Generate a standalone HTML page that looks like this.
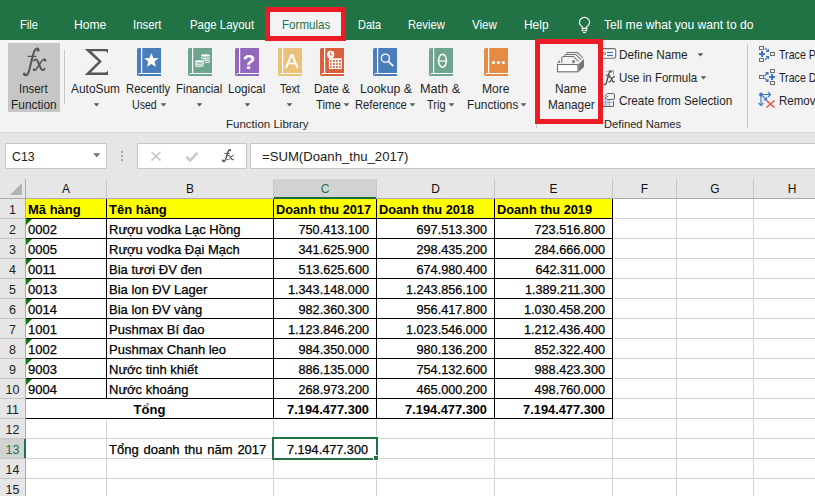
<!DOCTYPE html>
<html><head><meta charset="utf-8"><style>
*{margin:0;padding:0;box-sizing:border-box}
html,body{width:815px;height:496px;overflow:hidden;background:#fff;font-family:"Liberation Sans",sans-serif}
.a{position:absolute}
.tab{position:absolute;top:18px;font-size:12.2px;color:#fff;line-height:14px;white-space:nowrap}
.rb{position:absolute;font-size:12px;color:#262626;line-height:16px;white-space:nowrap;text-align:center}
.hl{position:absolute;background:#d4d4d4}
.vl{position:absolute;background:#d4d4d4}
.ch{position:absolute;top:180px;height:19px;font-size:12px;color:#111;text-align:center;line-height:19px}
.rh{position:absolute;left:0;width:25px;height:19px;font-size:12.5px;color:#222;text-align:center;line-height:22px}
.c{position:absolute;height:19px;font-size:13px;line-height:21px;color:#000;white-space:nowrap;overflow:visible;-webkit-text-stroke:0.25px #000}
.b{font-weight:bold;-webkit-text-stroke:0}
.r{text-align:right}
.n{transform:scaleX(0.975);transform-origin:100% 0}
.nb{transform:scaleX(0.985);transform-origin:100% 0}
</style></head><body>

<div class="a" style="left:0;top:0;width:815px;height:40px;background:#217346"></div>
<svg class="a" style="left:578px;top:16px" width="13" height="18" viewBox="0 0 13 18"><path d="M4.3 12.4V10.9Q1.4 8.6 1.4 6.4A5.1 5.1 0 0 1 11.6 6.4Q11.6 8.6 8.7 10.9V12.4Z" fill="none" stroke="#fff" stroke-width="1.15"/><rect x="4.3" y="12.4" width="4.4" height="2.3" fill="none" stroke="#fff" stroke-width="1.05"/><path d="M5 16.6H8" stroke="#fff" stroke-width="1.1"/></svg>
<div class="a" style="left:0;top:40px;width:815px;height:92px;background:#f3f3f3"></div>
<div class="a" style="left:0;top:132px;width:815px;height:1px;background:#d6d6d6"></div>
<div class="a" style="left:265px;top:7px;width:81px;height:34px;background:#f3f3f3;border:5px solid #ec1c24"></div>
<div class="a" style="left:20.10px;top:18.50px;font-size:12.4px;line-height:12.4px;color:#fff;white-space:nowrap;transform:scaleX(0.8966);transform-origin:0 0;">File</div>
<div class="a" style="left:73.60px;top:18.50px;font-size:12.4px;line-height:12.4px;color:#fff;white-space:nowrap;transform:scaleX(0.9786);transform-origin:0 0;">Home</div>
<div class="a" style="left:133.40px;top:18.50px;font-size:12.4px;line-height:12.4px;color:#fff;white-space:nowrap;transform:scaleX(0.9161);transform-origin:0 0;">Insert</div>
<div class="a" style="left:189.60px;top:18.50px;font-size:12.4px;line-height:12.4px;color:#fff;white-space:nowrap;transform:scaleX(0.9206);transform-origin:0 0;">Page Layout</div>
<div class="a" style="left:357.70px;top:18.50px;font-size:12.4px;line-height:12.4px;color:#fff;white-space:nowrap;transform:scaleX(0.8846);transform-origin:0 0;">Data</div>
<div class="a" style="left:408.00px;top:18.50px;font-size:12.4px;line-height:12.4px;color:#fff;white-space:nowrap;transform:scaleX(0.9048);transform-origin:0 0;">Review</div>
<div class="a" style="left:471.90px;top:18.50px;font-size:12.4px;line-height:12.4px;color:#fff;white-space:nowrap;transform:scaleX(0.9377);transform-origin:0 0;">View</div>
<div class="a" style="left:524.40px;top:18.50px;font-size:12.4px;line-height:12.4px;color:#fff;white-space:nowrap;transform:scaleX(0.9615);transform-origin:0 0;">Help</div>
<div class="a" style="left:604.40px;top:18.50px;font-size:12.4px;line-height:12.4px;color:#fff;white-space:nowrap;transform:scaleX(0.9777);transform-origin:0 0;">Tell me what you want to do</div>
<div class="a" style="left:281.60px;top:18.50px;font-size:12.4px;line-height:12.4px;color:#217346;white-space:nowrap;transform:scaleX(0.9360);transform-origin:0 0;">Formulas</div>
<div class="a" style="left:8px;top:43px;width:52px;height:69px;background:#c6c6c6"></div>
<svg class="a" style="left:16px;top:44px" width="36" height="36" viewBox="0 0 36 36"><g fill="none" stroke="#555" stroke-linecap="round"><path d="M8 30.2Q9.5 32.2 11.3 30.6Q12.8 29 14 23L17.3 10Q18.8 4.6 21.3 4.6Q22.6 4.8 22.3 6" stroke-width="2"/><path d="M12.2 12.4H20" stroke-width="1.3"/><path d="M18 16.6Q20.2 13.8 21.8 17.5L24.8 24.2Q26.4 27.6 28.6 24.8" stroke-width="1.9"/><path d="M29.2 15.8Q28.2 14.2 26.2 16.4L20.2 25.2Q18.6 27.2 17.8 25.6" stroke-width="1.5"/></g><circle cx="8.3" cy="30" r="1.5" fill="#555"/><circle cx="22" cy="6.3" r="1.4" fill="#555"/><circle cx="29" cy="16.2" r="1.3" fill="#555"/><circle cx="18" cy="25.8" r="1.3" fill="#555"/></svg>
<div class="a" style="left:19.40px;top:82.50px;font-size:12.4px;line-height:12.4px;color:#1f1f1f;white-space:nowrap;transform:scaleX(0.9226);transform-origin:0 0;">Insert</div>
<div class="a" style="left:10.70px;top:99.00px;font-size:12.4px;line-height:12.4px;color:#1f1f1f;white-space:nowrap;transform:scaleX(0.9610);transform-origin:0 0;">Function</div>
<div class="a" style="left:64px;top:50px;width:1px;height:54px;background:#c8c8c8"></div>
<svg class="a" style="left:80px;top:44px" width="34" height="36" viewBox="0 0 34 36"><path d="M4.7 4.9H28V9.6Q27.4 7.5 25.5 7.3H11.2L21.9 17.4L10.8 28.4H25.5Q27.4 28.2 28 26V30.9H4.7L18.4 17.4Z" fill="#575757"/></svg>
<div class="a" style="left:71.00px;top:82.50px;font-size:12.4px;line-height:12.4px;color:#1f1f1f;white-space:nowrap;transform:scaleX(0.9623);transform-origin:0 0;">AutoSum</div>
<svg class="a" style="left:93.0px;top:102.9px" width="7" height="4" viewBox="0 0 7 4"><path d="M0.6 0.3H6.4L3.5 3.4Z" fill="#5a5a5a"/></svg>
<svg class="a" style="left:137px;top:48px" width="24" height="28" viewBox="0 0 24 28"><path d="M1.5 0H24V28H1.5Q0 28 0 26.5V1.5Q0 0 1.5 0Z" fill="#4a7ebb"/><rect x="4" y="0" width="1.2" height="25" fill="#fff"/><path d="M1 26.5L2.5 25H24V26H2.2L1.5 27Z" fill="#fff"/><path d="M14.40 5.00L16.34 9.93L21.63 10.25L17.54 13.62L18.87 18.75L14.40 15.90L9.93 18.75L11.26 13.62L7.17 10.25L12.46 9.93Z" fill="#fff"/></svg>
<div class="a" style="left:126.30px;top:82.50px;font-size:12.4px;line-height:12.4px;color:#1f1f1f;white-space:nowrap;transform:scaleX(0.9143);transform-origin:0 0;">Recently</div>
<div class="a" style="left:132.40px;top:99.00px;font-size:12.4px;line-height:12.4px;color:#1f1f1f;white-space:nowrap;transform:scaleX(0.8565);transform-origin:0 0;">Used</div>
<svg class="a" style="left:160.0px;top:102.9px" width="7" height="4" viewBox="0 0 7 4"><path d="M0.6 0.3H6.4L3.5 3.4Z" fill="#5a5a5a"/></svg>
<svg class="a" style="left:188px;top:48px" width="24" height="28" viewBox="0 0 24 28"><path d="M1.5 0H24V28H1.5Q0 28 0 26.5V1.5Q0 0 1.5 0Z" fill="#6ea58e"/><rect x="4" y="0" width="1.2" height="25" fill="#fff"/><path d="M1 26.5L2.5 25H24V26H2.2L1.5 27Z" fill="#fff"/><ellipse cx="17.45" cy="13.649999999999999" rx="4.6" ry="1.35" fill="#fff"/><ellipse cx="17.45" cy="13.0" rx="3.9" ry="0.9" fill="#6ea58e"/><ellipse cx="17.45" cy="11.6" rx="4.6" ry="1.35" fill="#fff"/><ellipse cx="17.45" cy="10.95" rx="3.9" ry="0.9" fill="#6ea58e"/><ellipse cx="17.45" cy="9.55" rx="4.6" ry="1.35" fill="#fff"/><ellipse cx="17.45" cy="8.9" rx="3.9" ry="0.9" fill="#6ea58e"/><ellipse cx="17.45" cy="7.5" rx="4.6" ry="1.15" fill="#fff"/><ellipse cx="11.45" cy="15" rx="5.6" ry="3.8" fill="#6ea58e"/><ellipse cx="11.45" cy="17.5" rx="4.6" ry="1.35" fill="#fff"/><ellipse cx="11.45" cy="16.85" rx="3.9" ry="0.9" fill="#6ea58e"/><ellipse cx="11.45" cy="15.45" rx="4.6" ry="1.35" fill="#fff"/><ellipse cx="11.45" cy="14.8" rx="3.9" ry="0.9" fill="#6ea58e"/><ellipse cx="11.45" cy="13.4" rx="4.6" ry="1.15" fill="#fff"/></svg>
<div class="a" style="left:176.40px;top:82.50px;font-size:12.4px;line-height:12.4px;color:#1f1f1f;white-space:nowrap;transform:scaleX(0.9355);transform-origin:0 0;">Financial</div>
<svg class="a" style="left:195.7px;top:102.9px" width="7" height="4" viewBox="0 0 7 4"><path d="M0.6 0.3H6.4L3.5 3.4Z" fill="#5a5a5a"/></svg>
<svg class="a" style="left:235px;top:48px" width="24" height="28" viewBox="0 0 24 28"><path d="M1.5 0H24V28H1.5Q0 28 0 26.5V1.5Q0 0 1.5 0Z" fill="#9268bc"/><rect x="4" y="0" width="1.2" height="25" fill="#fff"/><path d="M1 26.5L2.5 25H24V26H2.2L1.5 27Z" fill="#fff"/><text x="14" y="21" text-anchor="middle" font-family="Liberation Sans" font-weight="bold" font-size="21" fill="#fff">?</text></svg>
<div class="a" style="left:228.40px;top:82.50px;font-size:12.4px;line-height:12.4px;color:#1f1f1f;white-space:nowrap;transform:scaleX(0.9489);transform-origin:0 0;">Logical</div>
<svg class="a" style="left:243.7px;top:102.9px" width="7" height="4" viewBox="0 0 7 4"><path d="M0.6 0.3H6.4L3.5 3.4Z" fill="#5a5a5a"/></svg>
<svg class="a" style="left:278px;top:48px" width="24" height="28" viewBox="0 0 24 28"><path d="M1.5 0H24V28H1.5Q0 28 0 26.5V1.5Q0 0 1.5 0Z" fill="#ebc17a"/><rect x="4" y="0" width="1.2" height="25" fill="#fff"/><path d="M1 26.5L2.5 25H24V26H2.2L1.5 27Z" fill="#fff"/><text x="13.9" y="20" text-anchor="middle" font-family="Liberation Sans" font-size="20.5" fill="#fff">A</text></svg>
<div class="a" style="left:279.60px;top:82.50px;font-size:12.4px;line-height:12.4px;color:#1f1f1f;white-space:nowrap;transform:scaleX(0.8746);transform-origin:0 0;">Text</div>
<svg class="a" style="left:286.1px;top:102.9px" width="7" height="4" viewBox="0 0 7 4"><path d="M0.6 0.3H6.4L3.5 3.4Z" fill="#5a5a5a"/></svg>
<svg class="a" style="left:320px;top:48px" width="24" height="28" viewBox="0 0 24 28"><path d="M1.5 0H24V28H1.5Q0 28 0 26.5V1.5Q0 0 1.5 0Z" fill="#d9603b"/><rect x="4" y="0" width="1.2" height="25" fill="#fff"/><path d="M1 26.5L2.5 25H24V26H2.2L1.5 27Z" fill="#fff"/><circle cx="10.7" cy="6.4" r="3.6" fill="#fff"/><path d="M10.4 4.2V6.8H12.6" stroke="#d9603b" stroke-width="1" fill="none"/><rect x="8.9" y="10.2" width="13" height="10.8" fill="#fff"/><rect x="10.05" y="12.1" width="1.8" height="1.8" fill="#d9603b"/><rect x="13.05" y="12.1" width="1.8" height="1.8" fill="#d9603b"/><rect x="16.05" y="12.1" width="1.8" height="1.8" fill="#d9603b"/><rect x="19.05" y="12.1" width="1.8" height="1.8" fill="#d9603b"/><rect x="10.05" y="15.1" width="1.8" height="1.8" fill="#d9603b"/><rect x="13.05" y="15.1" width="1.8" height="1.8" fill="#d9603b"/><rect x="16.05" y="15.1" width="1.8" height="1.8" fill="#d9603b"/><rect x="19.05" y="15.1" width="1.8" height="1.8" fill="#d9603b"/><rect x="10.05" y="18.1" width="1.8" height="1.8" fill="#d9603b"/><rect x="13.05" y="18.1" width="1.8" height="1.8" fill="#d9603b"/><rect x="16.05" y="18.1" width="1.8" height="1.8" fill="#d9603b"/><rect x="19.05" y="18.1" width="1.8" height="1.8" fill="#d9603b"/></svg>
<div class="a" style="left:313.90px;top:82.50px;font-size:12.4px;line-height:12.4px;color:#1f1f1f;white-space:nowrap;transform:scaleX(0.9424);transform-origin:0 0;">Date &amp;</div>
<div class="a" style="left:316.00px;top:99.00px;font-size:12.4px;line-height:12.4px;color:#1f1f1f;white-space:nowrap;transform:scaleX(0.9227);transform-origin:0 0;">Time</div>
<svg class="a" style="left:343.0px;top:102.9px" width="7" height="4" viewBox="0 0 7 4"><path d="M0.6 0.3H6.4L3.5 3.4Z" fill="#5a5a5a"/></svg>
<svg class="a" style="left:373px;top:48px" width="24" height="28" viewBox="0 0 24 28"><path d="M1.5 0H24V28H1.5Q0 28 0 26.5V1.5Q0 0 1.5 0Z" fill="#4a7ebb"/><rect x="4" y="0" width="1.2" height="25" fill="#fff"/><path d="M1 26.5L2.5 25H24V26H2.2L1.5 27Z" fill="#fff"/><circle cx="12.4" cy="10.2" r="4.1" fill="none" stroke="#fff" stroke-width="1.4"/><path d="M15.4 13.3L19.8 17.7" stroke="#fff" stroke-width="1.7" stroke-linecap="round"/></svg>
<div class="a" style="left:359.60px;top:82.50px;font-size:12.4px;line-height:12.4px;color:#1f1f1f;white-space:nowrap;transform:scaleX(0.9926);transform-origin:0 0;">Lookup &amp;</div>
<div class="a" style="left:355.20px;top:99.00px;font-size:12.4px;line-height:12.4px;color:#1f1f1f;white-space:nowrap;transform:scaleX(0.9052);transform-origin:0 0;">Reference</div>
<svg class="a" style="left:409.2px;top:102.9px" width="7" height="4" viewBox="0 0 7 4"><path d="M0.6 0.3H6.4L3.5 3.4Z" fill="#5a5a5a"/></svg>
<svg class="a" style="left:429px;top:48px" width="24" height="28" viewBox="0 0 24 28"><path d="M1.5 0H24V28H1.5Q0 28 0 26.5V1.5Q0 0 1.5 0Z" fill="#6ea58e"/><rect x="4" y="0" width="1.2" height="25" fill="#fff"/><path d="M1 26.5L2.5 25H24V26H2.2L1.5 27Z" fill="#fff"/><ellipse cx="13.5" cy="12.65" rx="3.95" ry="6.5" fill="none" stroke="#fff" stroke-width="1.5"/><path d="M9.8 13H17.2" stroke="#fff" stroke-width="1.2"/></svg>
<div class="a" style="left:420.40px;top:82.50px;font-size:12.4px;line-height:12.4px;color:#1f1f1f;white-space:nowrap;transform:scaleX(1.0227);transform-origin:0 0;">Math &amp;</div>
<div class="a" style="left:427.00px;top:99.00px;font-size:12.4px;line-height:12.4px;color:#1f1f1f;white-space:nowrap;transform:scaleX(0.8854);transform-origin:0 0;">Trig</div>
<svg class="a" style="left:447.8px;top:102.9px" width="7" height="4" viewBox="0 0 7 4"><path d="M0.6 0.3H6.4L3.5 3.4Z" fill="#5a5a5a"/></svg>
<svg class="a" style="left:484px;top:48px" width="24" height="28" viewBox="0 0 24 28"><path d="M1.5 0H24V28H1.5Q0 28 0 26.5V1.5Q0 0 1.5 0Z" fill="#e68b43"/><rect x="4" y="0" width="1.2" height="25" fill="#fff"/><path d="M1 26.5L2.5 25H24V26H2.2L1.5 27Z" fill="#fff"/><circle cx="9.5" cy="14.5" r="1.55" fill="#fff"/><circle cx="14.4" cy="14.5" r="1.55" fill="#fff"/><circle cx="19.3" cy="14.5" r="1.55" fill="#fff"/></svg>
<div class="a" style="left:482.30px;top:82.50px;font-size:12.4px;line-height:12.4px;color:#1f1f1f;white-space:nowrap;transform:scaleX(0.9762);transform-origin:0 0;">More</div>
<div class="a" style="left:466.60px;top:99.00px;font-size:12.4px;line-height:12.4px;color:#1f1f1f;white-space:nowrap;transform:scaleX(0.9562);transform-origin:0 0;">Functions</div>
<svg class="a" style="left:520.0px;top:102.9px" width="7" height="4" viewBox="0 0 7 4"><path d="M0.6 0.3H6.4L3.5 3.4Z" fill="#5a5a5a"/></svg>
<div class="a" style="left:226.40px;top:118.95px;font-size:11.4px;line-height:11.4px;color:#1f1f1f;white-space:nowrap;transform:scaleX(1.0118);transform-origin:0 0;">Function Library</div>
<svg class="a" style="left:550px;top:46px" width="42" height="32" viewBox="0 0 42 32"><path d="M7 16.8L9.8 14V16.8Z" fill="#6e6e6e"/><g fill="none" stroke="#6e6e6e" stroke-width="1.05"><path d="M16.5 7.5Q16.8 6.5 17.8 6.5H27.5L33 12"/><path d="M14.5 9.8Q15 8.5 16.3 8.5H25.8L31 13.7"/><path d="M11.8 16.8V12.5Q11.8 10.5 13.8 10.5H23.5L28.5 15.5"/><circle cx="23.5" cy="15.5" r="1"/></g><rect x="7.5" y="18.5" width="20.5" height="7.3" fill="#fff" stroke="#6e6e6e" stroke-width="1.1"/><path d="M28.6 26L34 21V13L28.6 18Z" fill="#777"/></svg>
<div class="a" style="left:555.40px;top:82.50px;font-size:12.4px;line-height:12.4px;color:#1f1f1f;white-space:nowrap;transform:scaleX(0.9545);transform-origin:0 0;">Name</div>
<div class="a" style="left:547.60px;top:99.00px;font-size:12.4px;line-height:12.4px;color:#1f1f1f;white-space:nowrap;transform:scaleX(0.9547);transform-origin:0 0;">Manager</div>
<svg class="a" style="left:598px;top:44px" width="22" height="66" viewBox="0 0 22 66"><rect x="3.5" y="4.6" width="14.2" height="9.6" rx="1.6" fill="#fff" stroke="#6e6e6e" stroke-width="1.1"/><circle cx="6.5" cy="9.5" r="1.3" fill="none" stroke="#6e6e6e" stroke-width="1"/><rect x="9" y="7.9" width="6" height="1.2" fill="#3a6fb7"/><rect x="9" y="10.9" width="6" height="1.2" fill="#3a6fb7"/><path d="M7.5 27.5H15.5V31" fill="none" stroke="#8a8a8a" stroke-width="0.8" stroke-dasharray="1 1"/><rect x="5" y="54" width="6.7" height="8.5" fill="#c4daf2"/><rect x="11.7" y="58" width="3.8" height="4.5" fill="#fff"/><path d="M5 58.5H15.5M7.5 54V62.5M11.7 54V62.5" stroke="#a8a8a8" stroke-width="0.9" fill="none"/><path d="M15.5 57V62.5H5" stroke="#666" stroke-width="1" fill="none"/><path d="M9.3 49.5H15Q16.5 49.5 16.5 51V54Q16.5 55.5 15 55.5H9.3L6.8 52.5Z" fill="#f3f3f3" stroke="#666" stroke-width="1"/><circle cx="9.4" cy="52.5" r="0.75" fill="#666"/></svg>
<div class="a" style="left:619.30px;top:48.90px;font-size:12.4px;line-height:12.4px;color:#1f1f1f;white-space:nowrap;transform:scaleX(0.9495);transform-origin:0 0;">Define Name</div>
<svg class="a" style="left:697.0px;top:52.9px" width="7" height="4" viewBox="0 0 7 4"><path d="M0.6 0.3H6.4L3.5 3.4Z" fill="#5a5a5a"/></svg>
<svg class="a" style="left:600px;top:69px" width="18" height="18" viewBox="0 0 36 36"><g fill="none" stroke="#4a4a4a" stroke-linecap="round"><path d="M8 30.2Q9.5 32.2 11.3 30.6Q12.8 29 14 23L17.3 10Q18.8 4.6 21.3 4.6Q22.6 4.8 22.3 6" stroke-width="2.6"/><path d="M12.2 12.4H20" stroke-width="2"/><path d="M18 16.6Q20.2 13.8 21.8 17.5L24.8 24.2Q26.4 27.6 28.6 24.8" stroke-width="2.4"/><path d="M29.2 15.8Q28.2 14.2 26.2 16.4L20.2 25.2Q18.6 27.2 17.8 25.6" stroke-width="2.2"/><path d="M17 3H27V12" stroke="#8a8a8a" stroke-width="1.4" stroke-dasharray="2 2"/></g></svg>
<div class="a" style="left:619.30px;top:71.90px;font-size:12.4px;line-height:12.4px;color:#1f1f1f;white-space:nowrap;transform:scaleX(0.9307);transform-origin:0 0;">Use in Formula</div>
<svg class="a" style="left:700.0px;top:75.9px" width="7" height="4" viewBox="0 0 7 4"><path d="M0.6 0.3H6.4L3.5 3.4Z" fill="#5a5a5a"/></svg>
<div class="a" style="left:619.30px;top:94.90px;font-size:12.4px;line-height:12.4px;color:#1f1f1f;white-space:nowrap;transform:scaleX(0.9449);transform-origin:0 0;">Create from Selection</div>
<div class="a" style="left:603.60px;top:118.95px;font-size:11.4px;line-height:11.4px;color:#1f1f1f;white-space:nowrap;transform:scaleX(0.9829);transform-origin:0 0;">Defined Names</div>
<div class="a" style="left:747px;top:44px;width:1px;height:84px;background:#c8c8c8"></div>
<div class="a" style="left:536px;top:119px;width:1px;height:9px;background:#c8c8c8"></div>
<svg class="a" style="left:754px;top:44px" width="26" height="66" viewBox="0 0 26 66"><g fill="none" stroke="#6e6e6e" stroke-width="1"><rect x="5.5" y="2.5" width="4" height="3"/><rect x="5.5" y="14.5" width="4" height="3"/><rect x="16.5" y="8.5" width="4" height="3"/><rect x="5.5" y="31.5" width="4" height="3"/><rect x="16.5" y="25.5" width="4" height="3"/><rect x="16.5" y="37.5" width="4" height="3"/></g><g fill="none" stroke="#3b78c4" stroke-width="2"><path d="M5 10H11M8 7V13"/><path d="M15 33H21M18 30V36"/></g><g fill="none" stroke="#3b78c4" stroke-width="1.1"><path d="M11 4L14.5 7.5M14.5 5V7.5H12"/><path d="M11 16L14.5 12.5M14.5 15V12.5H12"/><path d="M10.5 32L14 28.5M11.5 28.5H14V31"/><path d="M10.5 34L14 37.5M11.5 37.5H14V35"/><path d="M7 50.5H16.5M14 48L16.5 50.5L14 53"/><path d="M7 50.5V61.5M4.5 59L7 61.5L9.5 59"/><path d="M7 50.5L12.5 56M12.5 53V56H9.5"/></g><circle cx="7" cy="50.5" r="1.9" fill="#3b78c4"/><path d="M12.5 56.5L20.5 63.5M20.5 56.5L12.5 63.5" stroke="#dc5a43" stroke-width="1.6"/></svg>
<div class="a" style="left:778.60px;top:48.90px;font-size:12.4px;line-height:12.4px;color:#1f1f1f;white-space:nowrap;transform:scaleX(0.8600);transform-origin:0 0;">Trace Precedents</div>
<div class="a" style="left:778.60px;top:71.90px;font-size:12.4px;line-height:12.4px;color:#1f1f1f;white-space:nowrap;transform:scaleX(0.8600);transform-origin:0 0;">Trace Dependents</div>
<div class="a" style="left:778.60px;top:94.90px;font-size:12.4px;line-height:12.4px;color:#1f1f1f;white-space:nowrap;transform:scaleX(0.9300);transform-origin:0 0;">Remove Arrows</div>
<div class="a" style="left:535px;top:39px;width:68px;height:85px;border:5px solid #ec1c24"></div>
<div class="a" style="left:0;top:133px;width:815px;height:66px;background:#e6e6e6"></div>
<div class="a" style="left:5px;top:143px;width:102px;height:26px;background:#fff;border:1px solid #c6c6c6"></div>
<div class="a" style="left:12px;top:149px;font-size:12.3px;color:#222;line-height:16px">C13</div>
<svg class="a" style="left:92.8px;top:152.8px" width="8" height="5" viewBox="0 0 8 5"><path d="M0 0.2H7.4L3.7 4.2Z" fill="#707070"/></svg>
<div class="a" style="left:137px;top:143px;width:110px;height:26px;background:#fff;border:1px solid #c6c6c6"></div>
<div class="a" style="left:250px;top:143px;width:570px;height:26px;background:#fff;border:1px solid #c6c6c6"></div>
<div class="a" style="left:262.10px;top:150.00px;font-size:13px;line-height:13px;color:#222;white-space:nowrap;transform:scaleX(1.0105);transform-origin:0 0;">=SUM(Doanh_thu_2017)</div>
<div class="a" style="left:121px;top:151px;width:2px;height:2px;background:#a8a8a8"></div>
<div class="a" style="left:121px;top:155px;width:2px;height:2px;background:#a8a8a8"></div>
<div class="a" style="left:121px;top:159px;width:2px;height:2px;background:#a8a8a8"></div>
<svg class="a" style="left:150px;top:151px" width="12" height="11" viewBox="0 0 12 11"><path d="M1.5 1L10.5 9.5M10.5 1L1.5 9.5" stroke="#c2c2c2" stroke-width="1.6"/></svg>
<svg class="a" style="left:185px;top:151px" width="14" height="11" viewBox="0 0 14 11"><path d="M1.3 5.8L5.2 9.6L12.6 1.6" stroke="#c6c6c6" stroke-width="2.4" fill="none"/></svg>
<svg class="a" style="left:216px;top:144px" width="24" height="22" viewBox="0 0 24 22"><g fill="none" stroke="#555" stroke-linecap="round"><path d="M6.6 16.6Q7.6 18.1 9 16.9Q10 15.6 10.8 11.5L12 7.8Q12.8 5.7 14.3 5.8" stroke-width="1.4"/><path d="M8.8 9.4H13.2" stroke-width="1"/><path d="M11.9 11.9Q13.2 10.9 14.1 12.6L15.6 15.2Q16.5 16.2 17.3 15.4" stroke-width="1.1"/><path d="M17.6 11.6Q17 11 16.1 11.9L12.9 15.5Q12.1 16.3 11.5 15.6" stroke-width="1"/></g><circle cx="6.8" cy="16.4" r="1" fill="#555"/><circle cx="14.1" cy="6.2" r="1" fill="#555"/></svg>
<svg class="a" style="left:9px;top:182px" width="14" height="14" viewBox="0 0 14 14"><path d="M13 1V13H1Z" fill="#b4b4b4"/></svg>
<div class="a" style="left:25px;top:198px;width:790px;height:298px;background:#fff"></div>
<div class="a" style="left:0;top:199px;width:25px;height:297px;background:#e6e6e6"></div>
<div class="a" style="left:0;top:198px;width:815px;height:1px;background:#ababab"></div>
<div class="a" style="left:25px;top:179px;width:1px;height:317px;background:#ababab"></div>
<div class="ch" style="left:26px;width:80px;">A</div>
<div class="a" style="left:106px;top:179px;width:1px;height:19px;background:#c6c6c6"></div>
<div class="ch" style="left:107px;width:166px;">B</div>
<div class="a" style="left:273px;top:179px;width:1px;height:19px;background:#c6c6c6"></div>
<div class="a" style="left:274px;top:179px;width:102px;height:19px;background:#d2d2d2"></div>
<div class="ch" style="left:274px;width:102px;color:#217346">C</div>
<div class="a" style="left:376px;top:179px;width:1px;height:19px;background:#c6c6c6"></div>
<div class="ch" style="left:377px;width:117px;">D</div>
<div class="a" style="left:494px;top:179px;width:1px;height:19px;background:#c6c6c6"></div>
<div class="ch" style="left:495px;width:117px;">E</div>
<div class="a" style="left:612px;top:179px;width:1px;height:19px;background:#c6c6c6"></div>
<div class="ch" style="left:613px;width:63px;">F</div>
<div class="a" style="left:676px;top:179px;width:1px;height:19px;background:#c6c6c6"></div>
<div class="ch" style="left:677px;width:76px;">G</div>
<div class="a" style="left:753px;top:179px;width:1px;height:19px;background:#c6c6c6"></div>
<div class="ch" style="left:754px;width:76px;">H</div>
<div class="a" style="left:830px;top:179px;width:1px;height:19px;background:#c6c6c6"></div>
<div class="hl" style="left:26px;top:218px;width:790px;height:1px"></div>
<div class="a" style="left:0;top:218px;width:25px;height:1px;background:#c6c6c6"></div>
<div class="hl" style="left:26px;top:238px;width:790px;height:1px"></div>
<div class="a" style="left:0;top:238px;width:25px;height:1px;background:#c6c6c6"></div>
<div class="hl" style="left:26px;top:258px;width:790px;height:1px"></div>
<div class="a" style="left:0;top:258px;width:25px;height:1px;background:#c6c6c6"></div>
<div class="hl" style="left:26px;top:278px;width:790px;height:1px"></div>
<div class="a" style="left:0;top:278px;width:25px;height:1px;background:#c6c6c6"></div>
<div class="hl" style="left:26px;top:298px;width:790px;height:1px"></div>
<div class="a" style="left:0;top:298px;width:25px;height:1px;background:#c6c6c6"></div>
<div class="hl" style="left:26px;top:318px;width:790px;height:1px"></div>
<div class="a" style="left:0;top:318px;width:25px;height:1px;background:#c6c6c6"></div>
<div class="hl" style="left:26px;top:338px;width:790px;height:1px"></div>
<div class="a" style="left:0;top:338px;width:25px;height:1px;background:#c6c6c6"></div>
<div class="hl" style="left:26px;top:358px;width:790px;height:1px"></div>
<div class="a" style="left:0;top:358px;width:25px;height:1px;background:#c6c6c6"></div>
<div class="hl" style="left:26px;top:378px;width:790px;height:1px"></div>
<div class="a" style="left:0;top:378px;width:25px;height:1px;background:#c6c6c6"></div>
<div class="hl" style="left:26px;top:398px;width:790px;height:1px"></div>
<div class="a" style="left:0;top:398px;width:25px;height:1px;background:#c6c6c6"></div>
<div class="hl" style="left:26px;top:418px;width:790px;height:1px"></div>
<div class="a" style="left:0;top:418px;width:25px;height:1px;background:#c6c6c6"></div>
<div class="hl" style="left:26px;top:438px;width:790px;height:1px"></div>
<div class="a" style="left:0;top:438px;width:25px;height:1px;background:#c6c6c6"></div>
<div class="hl" style="left:26px;top:458px;width:790px;height:1px"></div>
<div class="a" style="left:0;top:458px;width:25px;height:1px;background:#c6c6c6"></div>
<div class="hl" style="left:26px;top:478px;width:790px;height:1px"></div>
<div class="a" style="left:0;top:478px;width:25px;height:1px;background:#c6c6c6"></div>
<div class="hl" style="left:26px;top:498px;width:790px;height:1px"></div>
<div class="a" style="left:0;top:498px;width:25px;height:1px;background:#c6c6c6"></div>
<div class="vl" style="left:106px;top:199px;width:1px;height:297px"></div>
<div class="vl" style="left:273px;top:199px;width:1px;height:297px"></div>
<div class="vl" style="left:376px;top:199px;width:1px;height:297px"></div>
<div class="vl" style="left:494px;top:199px;width:1px;height:297px"></div>
<div class="vl" style="left:612px;top:199px;width:1px;height:297px"></div>
<div class="vl" style="left:676px;top:199px;width:1px;height:297px"></div>
<div class="vl" style="left:753px;top:199px;width:1px;height:297px"></div>
<div class="vl" style="left:830px;top:199px;width:1px;height:297px"></div>
<div class="rh" style="top:199px;">1</div>
<div class="rh" style="top:219px;">2</div>
<div class="rh" style="top:239px;">3</div>
<div class="rh" style="top:259px;">4</div>
<div class="rh" style="top:279px;">5</div>
<div class="rh" style="top:299px;">6</div>
<div class="rh" style="top:319px;">7</div>
<div class="rh" style="top:339px;">8</div>
<div class="rh" style="top:359px;">9</div>
<div class="rh" style="top:379px;">10</div>
<div class="rh" style="top:399px;">11</div>
<div class="rh" style="top:419px;">12</div>
<div class="a" style="left:0;top:439px;width:26px;height:19px;background:#d2d2d2;border-right:2px solid #217346"></div>
<div class="rh" style="top:439px;color:#217346">13</div>
<div class="rh" style="top:459px;">14</div>
<div class="rh" style="top:479px;">15</div>
<div class="a" style="left:25px;top:198px;width:588px;height:21px;background:#ff0"></div>
<div class="a" style="left:25px;top:218px;width:588px;height:1px;background:#000"></div>
<div class="a" style="left:25px;top:238px;width:588px;height:1px;background:#000"></div>
<div class="a" style="left:25px;top:258px;width:588px;height:1px;background:#000"></div>
<div class="a" style="left:25px;top:278px;width:588px;height:1px;background:#000"></div>
<div class="a" style="left:25px;top:298px;width:588px;height:1px;background:#000"></div>
<div class="a" style="left:25px;top:318px;width:588px;height:1px;background:#000"></div>
<div class="a" style="left:25px;top:338px;width:588px;height:1px;background:#000"></div>
<div class="a" style="left:25px;top:358px;width:588px;height:1px;background:#000"></div>
<div class="a" style="left:25px;top:378px;width:588px;height:1px;background:#000"></div>
<div class="a" style="left:25px;top:398px;width:588px;height:1px;background:#000"></div>
<div class="a" style="left:25px;top:418px;width:588px;height:1px;background:#000"></div>
<div class="a" style="left:25px;top:198px;width:588px;height:1px;background:#000"></div>
<div class="a" style="left:25px;top:198px;width:1px;height:221px;background:#000"></div>
<div class="a" style="left:106px;top:198px;width:1px;height:201px;background:#000"></div>
<div class="a" style="left:273px;top:198px;width:1px;height:221px;background:#000"></div>
<div class="a" style="left:376px;top:198px;width:1px;height:221px;background:#000"></div>
<div class="a" style="left:494px;top:198px;width:1px;height:221px;background:#000"></div>
<div class="a" style="left:612px;top:198px;width:1px;height:221px;background:#000"></div>
<div class="a" style="left:25px;top:179px;width:1px;height:317px;background:#ababab"></div>
<div class="a" style="left:24px;top:439px;width:2px;height:19px;background:#217346"></div>
<div class="a" style="left:0;top:198px;width:815px;height:1px;background:#ababab"></div>
<div class="a" style="left:274px;top:197px;width:102px;height:2px;background:#1a6b3e"></div>
<div class="c b" style="left:28px;top:199px;">Mã hàng</div>
<div class="c b" style="left:109px;top:199px;">Tên hàng</div>
<div class="c b" style="left:276px;top:199px;transform:scaleX(0.982);transform-origin:0 0">Doanh thu 2017</div>
<div class="c b" style="left:379px;top:199px;transform:scaleX(0.982);transform-origin:0 0">Doanh thu 2018</div>
<div class="c b" style="left:497px;top:199px;transform:scaleX(0.982);transform-origin:0 0">Doanh thu 2019</div>
<div class="c" style="left:28px;top:219px;">0002</div>
<div class="c" style="left:109px;top:219px;">Rượu vodka Lạc Hồng</div>
<div class="c r n" style="left:274px;width:95px;top:219px">750.413.100</div>
<div class="c r n" style="left:377px;width:110px;top:219px">697.513.300</div>
<div class="c r n" style="left:495px;width:110px;top:219px">723.516.800</div>
<div class="a" style="left:26px;top:219px;width:0;height:0;border-top:6px solid #008000;border-right:6px solid transparent"></div>
<div class="c" style="left:28px;top:239px;">0005</div>
<div class="c" style="left:109px;top:239px;">Rượu vodka Đại Mạch</div>
<div class="c r n" style="left:274px;width:95px;top:239px">341.625.900</div>
<div class="c r n" style="left:377px;width:110px;top:239px">298.435.200</div>
<div class="c r n" style="left:495px;width:110px;top:239px">284.666.000</div>
<div class="a" style="left:26px;top:239px;width:0;height:0;border-top:6px solid #008000;border-right:6px solid transparent"></div>
<div class="c" style="left:28px;top:259px;">0011</div>
<div class="c" style="left:109px;top:259px;">Bia tươi ĐV đen</div>
<div class="c r n" style="left:274px;width:95px;top:259px">513.625.600</div>
<div class="c r n" style="left:377px;width:110px;top:259px">674.980.400</div>
<div class="c r n" style="left:495px;width:110px;top:259px">642.311.000</div>
<div class="a" style="left:26px;top:259px;width:0;height:0;border-top:6px solid #008000;border-right:6px solid transparent"></div>
<div class="c" style="left:28px;top:279px;">0013</div>
<div class="c" style="left:109px;top:279px;">Bia lon ĐV Lager</div>
<div class="c r n" style="left:274px;width:95px;top:279px">1.343.148.000</div>
<div class="c r n" style="left:377px;width:110px;top:279px">1.243.856.100</div>
<div class="c r n" style="left:495px;width:110px;top:279px">1.389.211.300</div>
<div class="a" style="left:26px;top:279px;width:0;height:0;border-top:6px solid #008000;border-right:6px solid transparent"></div>
<div class="c" style="left:28px;top:299px;">0014</div>
<div class="c" style="left:109px;top:299px;">Bia lon ĐV vàng</div>
<div class="c r n" style="left:274px;width:95px;top:299px">982.360.300</div>
<div class="c r n" style="left:377px;width:110px;top:299px">956.417.800</div>
<div class="c r n" style="left:495px;width:110px;top:299px">1.030.458.200</div>
<div class="a" style="left:26px;top:299px;width:0;height:0;border-top:6px solid #008000;border-right:6px solid transparent"></div>
<div class="c" style="left:28px;top:319px;">1001</div>
<div class="c" style="left:109px;top:319px;">Pushmax Bí đao</div>
<div class="c r n" style="left:274px;width:95px;top:319px">1.123.846.200</div>
<div class="c r n" style="left:377px;width:110px;top:319px">1.023.546.000</div>
<div class="c r n" style="left:495px;width:110px;top:319px">1.212.436.400</div>
<div class="a" style="left:26px;top:319px;width:0;height:0;border-top:6px solid #008000;border-right:6px solid transparent"></div>
<div class="c" style="left:28px;top:339px;">1002</div>
<div class="c" style="left:109px;top:339px;">Pushmax Chanh leo</div>
<div class="c r n" style="left:274px;width:95px;top:339px">984.350.000</div>
<div class="c r n" style="left:377px;width:110px;top:339px">980.136.200</div>
<div class="c r n" style="left:495px;width:110px;top:339px">852.322.400</div>
<div class="a" style="left:26px;top:339px;width:0;height:0;border-top:6px solid #008000;border-right:6px solid transparent"></div>
<div class="c" style="left:28px;top:359px;">9003</div>
<div class="c" style="left:109px;top:359px;">Nước tinh khiết</div>
<div class="c r n" style="left:274px;width:95px;top:359px">886.135.000</div>
<div class="c r n" style="left:377px;width:110px;top:359px">754.132.600</div>
<div class="c r n" style="left:495px;width:110px;top:359px">988.423.300</div>
<div class="a" style="left:26px;top:359px;width:0;height:0;border-top:6px solid #008000;border-right:6px solid transparent"></div>
<div class="c" style="left:28px;top:379px;">9004</div>
<div class="c" style="left:109px;top:379px;">Nước khoáng</div>
<div class="c r n" style="left:274px;width:95px;top:379px">268.973.200</div>
<div class="c r n" style="left:377px;width:110px;top:379px">465.000.200</div>
<div class="c r n" style="left:495px;width:110px;top:379px">498.760.000</div>
<div class="a" style="left:26px;top:379px;width:0;height:0;border-top:6px solid #008000;border-right:6px solid transparent"></div>
<div class="a" style="left:106px;top:399px;width:1px;height:19px;background:#fff"></div>
<div class="c b" style="left:26px;width:247px;top:399px;text-align:center">Tổng</div>
<div class="c b r nb" style="left:274px;width:95px;top:399px">7.194.477.300</div>
<div class="c b r nb" style="left:377px;width:110px;top:399px">7.194.477.300</div>
<div class="c b r nb" style="left:495px;width:110px;top:399px">7.194.477.300</div>
<div class="c" style="left:109px;top:439px;word-spacing:1.2px">Tổng doanh thu năm 2017</div>
<div class="c r n" style="left:274px;width:94px;top:439px">7.194.477.300</div>
<div class="a" style="left:272px;top:437px;width:106px;height:23px;border:2px solid #217346"></div>
<div class="a" style="left:373px;top:455px;width:6px;height:6px;background:#217346;border:1px solid #fff"></div>
</body></html>
